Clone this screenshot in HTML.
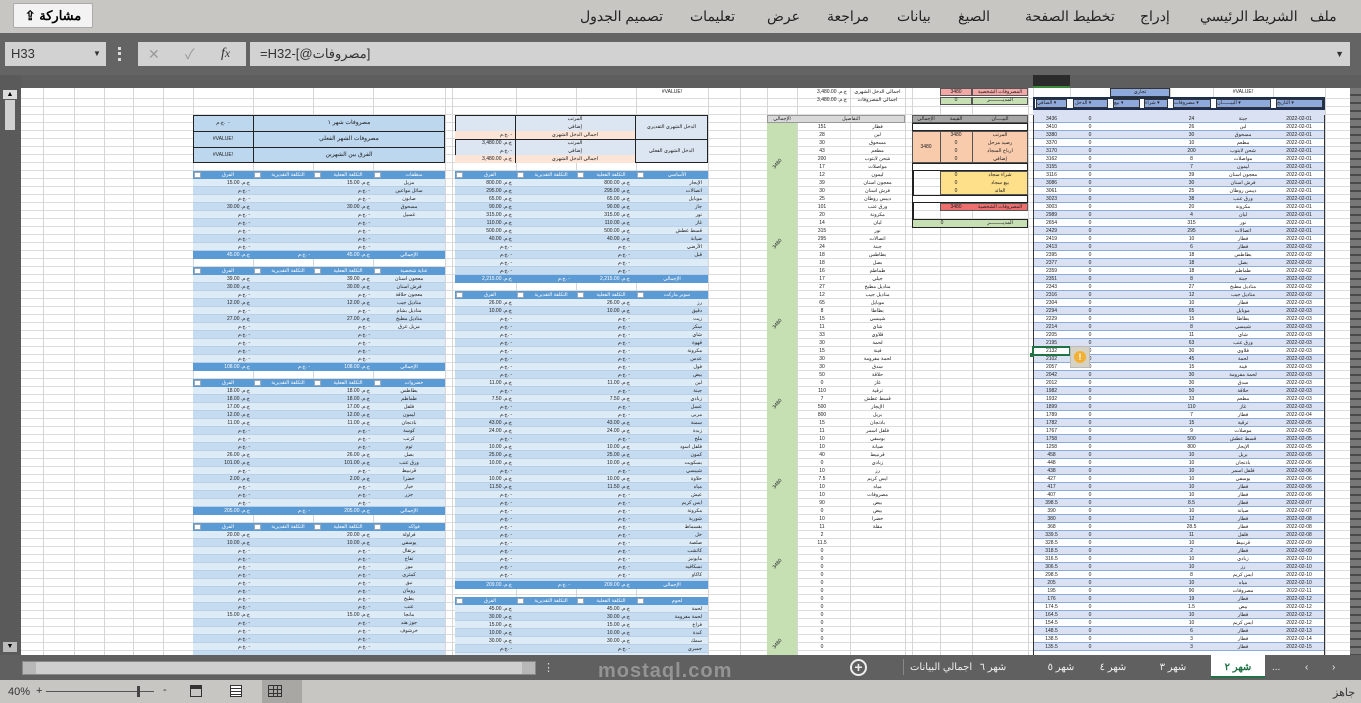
<!DOCTYPE html>
<html><head><meta charset="utf-8"><style>
*{margin:0;padding:0;box-sizing:border-box}
body{width:1361px;height:703px;overflow:hidden;background:#c8c6c3;position:relative;font-family:"Liberation Sans","Noto Sans CJK SC",sans-serif}
.a{position:absolute}
.t{position:absolute;font-size:5px;line-height:8px;color:#222;white-space:nowrap;overflow:hidden}
.ctr{text-align:center}.rt{text-align:right}
.vl{position:absolute;top:88px;width:1px;height:567px;background:#d6d6d6}
.hb{position:absolute;height:8px;background:#5b9bd5}
.band{position:absolute;background:repeating-linear-gradient(to bottom,#ddebf7 0 7px,#b9cfe8 7px 8px,#c5dbf0 8px 15px,#b9cfe8 15px 16px)}
.cb{position:absolute;width:7px;height:6px;background:#fff;border:1px solid #9ab}
.menu{position:absolute;top:8px;font-size:14px;color:#222}
.tab{position:absolute;top:662px;font-size:10px;color:#eee;white-space:nowrap}
.hl{position:absolute;font-size:5px;line-height:8px;color:#fff;text-align:center;white-space:nowrap}
</style></head><body>

<!-- ribbon -->
<div class="a" style="left:13px;top:3px;width:80px;height:25px;background:#f3f3f3;border:1px solid #aaa;border-radius:2px;font-size:13px;font-weight:bold;line-height:23px;text-align:center">⇪ مشاركة</div>
<div class="menu" style="left:580px">تصميم الجدول</div>
<div class="menu" style="left:690px">تعليمات</div>
<div class="menu" style="left:767px">عرض</div>
<div class="menu" style="left:827px">مراجعة</div>
<div class="menu" style="left:897px">بيانات</div>
<div class="menu" style="left:958px">الصيغ</div>
<div class="menu" style="left:1025px">تخطيط الصفحة</div>
<div class="menu" style="left:1140px">إدراج</div>
<div class="menu" style="left:1200px">الشريط الرئيسي</div>
<div class="menu" style="left:1310px">ملف</div>

<!-- formula area -->
<div class="a" style="left:0;top:33px;width:1361px;height:42px;background:#646464"></div>
<div class="a" style="left:5px;top:42px;width:101px;height:24px;background:#d2d2d2;font-size:13px;line-height:24px;padding-left:6px;color:#333">H33<span style="position:absolute;left:88px;font-size:8px">▼</span></div>
<div class="a" style="left:118px;top:47px;width:3px;height:14px;border-left:3px dotted #ddd"></div>
<div class="a" style="left:138px;top:42px;width:108px;height:24px;background:#d2d2d2;font-size:14px;line-height:24px;color:#999"><span style="position:absolute;left:10px">✕</span><span style="position:absolute;left:47px">✓</span><span style="position:absolute;left:83px;color:#333;font-style:italic;font-family:'Liberation Serif'">f<small>x</small></span></div>
<div class="a" style="left:250px;top:42px;width:1100px;height:24px;background:#d2d2d2;font-size:13px;line-height:24px;padding-left:10px;color:#333">=H32-[@مصروفات]<span style="position:absolute;right:6px;font-size:9px">▼</span></div>

<!-- column headers -->
<div class="a" style="left:0;top:75px;width:1361px;height:13px;background:#5e5e5e"></div>
<div class="a" style="left:1033px;top:75px;width:37px;height:13px;background:#2b2b2b;border-bottom:2px solid #3a8a3a"></div>
<div class="t" style="top:77px;left:0;width:1361px;color:#ddd;font-size:6px">
<span class="a" style="left:28px">AH</span><span class="a" style="left:56px">AG</span><span class="a" style="left:86px">AF</span><span class="a" style="left:115px">AE</span><span class="a" style="left:145px">AD</span><span class="a" style="left:175px">AC</span><span class="a" style="left:220px">AB</span><span class="a" style="left:280px">AA</span><span class="a" style="left:341px">Z</span><span class="a" style="left:407px">Y</span><span class="a" style="left:447px">X</span><span class="a" style="left:482px">W</span><span class="a" style="left:544px">V</span><span class="a" style="left:604px">U</span><span class="a" style="left:670px">T</span><span class="a" style="left:722px">S</span><span class="a" style="left:752px">R</span><span class="a" style="left:780px">Q</span><span class="a" style="left:821px">P</span><span class="a" style="left:876px">O</span><span class="a" style="left:906px">N M</span><span class="a" style="left:924px">L</span><span class="a" style="left:954px">K</span><span class="a" style="left:998px">J</span><span class="a" style="left:1029px">I</span><span class="a" style="left:1049px">H</span><span class="a" style="left:1088px">G</span><span class="a" style="left:1124px">F</span><span class="a" style="left:1154px">E</span><span class="a" style="left:1189px">D</span><span class="a" style="left:1241px">C</span><span class="a" style="left:1297px">B</span><span class="a" style="left:1336px">A</span></div>

<!-- grid -->
<div class="a" style="left:21px;top:88px;width:1329px;height:567px;background:#fff repeating-linear-gradient(to bottom,transparent 0 7px,#dcdcdc 7px 8px);background-position:0 3px"></div>
<div class="vl" style="left:43px"></div><div class="vl" style="left:74px"></div><div class="vl" style="left:104px"></div><div class="vl" style="left:133px"></div><div class="vl" style="left:163px"></div><div class="vl" style="left:193px"></div><div class="vl" style="left:253px"></div><div class="vl" style="left:313px"></div><div class="vl" style="left:373px"></div><div class="vl" style="left:445px"></div><div class="vl" style="left:452px"></div><div class="vl" style="left:516px"></div><div class="vl" style="left:576px"></div><div class="vl" style="left:636px"></div><div class="vl" style="left:708px"></div><div class="vl" style="left:740px"></div><div class="vl" style="left:767px"></div><div class="vl" style="left:797px"></div><div class="vl" style="left:850px"></div><div class="vl" style="left:905px"></div><div class="vl" style="left:912px"></div><div class="vl" style="left:940px"></div><div class="vl" style="left:972px"></div><div class="vl" style="left:1028px"></div><div class="vl" style="left:1033px"></div><div class="vl" style="left:1070px"></div><div class="vl" style="left:1110px"></div><div class="vl" style="left:1142px"></div><div class="vl" style="left:1170px"></div><div class="vl" style="left:1213px"></div><div class="vl" style="left:1273px"></div><div class="vl" style="left:1325px"></div>

<!-- left scrollbar -->
<div class="a" style="left:0;top:75px;width:21px;height:580px;background:#5a5a5a"></div>
<div class="a" style="left:3px;top:90px;width:14px;height:9px;background:#ddd;font-size:7px;text-align:center;line-height:9px">▲</div>
<div class="a" style="left:5px;top:100px;width:10px;height:30px;background:#d0d0d0"></div>
<div class="a" style="left:3px;top:642px;width:14px;height:10px;background:#bbb;font-size:7px;text-align:center;line-height:10px">▼</div>
<div class="a" style="left:1350px;top:88px;width:11px;height:567px;background:repeating-linear-gradient(to bottom,#777 0 6px,#4a4a4a 6px 8px)"></div>

<!-- LEFT BLOCK -->
<div class="a" style="left:193px;top:115px;width:252px;height:48px;background:#bdd7ee;border:1px solid #222"></div>
<div class="a" style="left:253px;top:115px;width:1px;height:48px;background:#222"></div>
<div class="a" style="left:193px;top:131px;width:252px;height:1px;background:#222"></div>
<div class="a" style="left:193px;top:147px;width:252px;height:1px;background:#222"></div>
<div class="t ctr" style="left:253px;top:119px;width:192px;font-size:6px">مصروفات شهر ١</div>
<div class="t ctr" style="left:253px;top:135px;width:192px;font-size:6px">مصروفات الشهر الفعلي</div>
<div class="t ctr" style="left:253px;top:151px;width:192px;font-size:6px">الفرق بين الشهرين</div>
<div class="t ctr" style="left:193px;top:119px;width:60px">ج.م. &nbsp;-</div>
<div class="t ctr" style="left:193px;top:135px;width:60px">#VALUE!</div>
<div class="t ctr" style="left:193px;top:151px;width:60px">#VALUE!</div>

<div class="hb" style="left:193px;top:171px;width:252px"></div>
<div class="band" style="left:193px;top:179px;width:252px;height:72px"></div>
<div class="hb" style="left:193px;top:251px;width:252px"></div>
<div class="hb" style="left:193px;top:267px;width:252px"></div>
<div class="band" style="left:193px;top:275px;width:252px;height:88px"></div>
<div class="hb" style="left:193px;top:363px;width:252px"></div>
<div class="hb" style="left:193px;top:379px;width:252px"></div>
<div class="band" style="left:193px;top:387px;width:252px;height:120px"></div>
<div class="hb" style="left:193px;top:507px;width:252px"></div>
<div class="hb" style="left:193px;top:523px;width:252px"></div>
<div class="band" style="left:193px;top:531px;width:252px;height:124px"></div>
<div class="cb" style="left:194px;top:172px"></div><div class="cb" style="left:254px;top:172px"></div><div class="cb" style="left:314px;top:172px"></div><div class="cb" style="left:374px;top:172px"></div>
<div class="cb" style="left:194px;top:268px"></div><div class="cb" style="left:254px;top:268px"></div><div class="cb" style="left:314px;top:268px"></div><div class="cb" style="left:374px;top:268px"></div>
<div class="cb" style="left:194px;top:380px"></div><div class="cb" style="left:254px;top:380px"></div><div class="cb" style="left:314px;top:380px"></div><div class="cb" style="left:374px;top:380px"></div>
<div class="cb" style="left:194px;top:524px"></div><div class="cb" style="left:254px;top:524px"></div><div class="cb" style="left:314px;top:524px"></div><div class="cb" style="left:374px;top:524px"></div>
<div class="hl" style="left:203px;top:171px;width:50px">الفرق</div><div class="hl" style="left:263px;top:171px;width:50px">التكلفة التقديرية</div><div class="hl" style="left:323px;top:171px;width:50px">التكلفة الفعلية</div><div class="hl" style="left:383px;top:171px;width:62px">منظفات</div>
<div class="hl" style="left:203px;top:267px;width:50px">الفرق</div><div class="hl" style="left:263px;top:267px;width:50px">التكلفة التقديرية</div><div class="hl" style="left:323px;top:267px;width:50px">التكلفة الفعلية</div><div class="hl" style="left:383px;top:267px;width:62px">عناية شخصية</div>
<div class="hl" style="left:203px;top:379px;width:50px">الفرق</div><div class="hl" style="left:263px;top:379px;width:50px">التكلفة التقديرية</div><div class="hl" style="left:323px;top:379px;width:50px">التكلفة الفعلية</div><div class="hl" style="left:383px;top:379px;width:62px">خضروات</div>
<div class="hl" style="left:203px;top:523px;width:50px">الفرق</div><div class="hl" style="left:263px;top:523px;width:50px">التكلفة التقديرية</div><div class="hl" style="left:323px;top:523px;width:50px">التكلفة الفعلية</div><div class="hl" style="left:383px;top:523px;width:62px">فواكه</div>
<div class="t rt" style="left:200px;top:251px;width:50px;color:#fff">ج.م. 45.00</div><div class="t rt" style="left:260px;top:251px;width:50px;color:#fff">ج.م. -</div><div class="t rt" style="left:320px;top:251px;width:50px;color:#fff">ج.م. 45.00</div><div class="t ctr" style="left:373px;top:251px;width:72px;color:#fff">الإجمالي</div>
<div class="t rt" style="left:200px;top:363px;width:50px;color:#fff">ج.م. 108.00</div><div class="t rt" style="left:260px;top:363px;width:50px;color:#fff">ج.م. -</div><div class="t rt" style="left:320px;top:363px;width:50px;color:#fff">ج.م. 108.00</div><div class="t ctr" style="left:373px;top:363px;width:72px;color:#fff">الإجمالي</div>
<div class="t rt" style="left:200px;top:507px;width:50px;color:#fff">ج.م. 205.00</div><div class="t rt" style="left:260px;top:507px;width:50px;color:#fff">ج.م. -</div><div class="t rt" style="left:320px;top:507px;width:50px;color:#fff">ج.م. 205.00</div><div class="t ctr" style="left:373px;top:507px;width:72px;color:#fff">الإجمالي</div>
<div class="t rt" style="left:200px;top:179px;width:50px">ج.م. 15.00<br>ج.م. -<br>ج.م. -<br>ج.م. 30.00<br>ج.م. -<br>ج.م. -<br>ج.م. -<br>ج.م. -<br>ج.م. -</div>
<div class="t rt" style="left:320px;top:179px;width:50px">ج.م. 15.00<br>ج.م. -<br>ج.م. -<br>ج.م. 30.00<br>ج.م. -<br>ج.م. -<br>ج.م. -<br>ج.م. -<br>ج.م. -</div>
<div class="t ctr" style="left:373px;top:179px;width:72px">مزيل<br>سائل مواعين<br>صابون<br>مسحوق<br>غسيل</div>
<div class="t rt" style="left:200px;top:275px;width:50px">ج.م. 39.00<br>ج.م. 30.00<br>ج.م. -<br>ج.م. 12.00<br>ج.م. -<br>ج.م. 27.00<br>ج.م. -<br>ج.م. -<br>ج.م. -<br>ج.م. -<br>ج.م. -</div>
<div class="t rt" style="left:320px;top:275px;width:50px">ج.م. 39.00<br>ج.م. 30.00<br>ج.م. -<br>ج.م. 12.00<br>ج.م. -<br>ج.م. 27.00<br>ج.م. -<br>ج.م. -<br>ج.م. -<br>ج.م. -<br>ج.م. -</div>
<div class="t ctr" style="left:373px;top:275px;width:72px">معجون اسنان<br>فرش اسنان<br>معجون حلاقة<br>مناديل جيب<br>مناديل بشام<br>مناديل مطبخ<br>مزيل عرق</div>
<div class="t rt" style="left:200px;top:387px;width:50px">ج.م. 18.00<br>ج.م. 18.00<br>ج.م. 17.00<br>ج.م. 12.00<br>ج.م. 11.00<br>ج.م. -<br>ج.م. -<br>ج.م. -<br>ج.م. 26.00<br>ج.م. 101.00<br>ج.م. -<br>ج.م. 2.00<br>ج.م. -<br>ج.م. -<br>ج.م. -</div>
<div class="t rt" style="left:320px;top:387px;width:50px">ج.م. 18.00<br>ج.م. 18.00<br>ج.م. 17.00<br>ج.م. 12.00<br>ج.م. 11.00<br>ج.م. -<br>ج.م. -<br>ج.م. -<br>ج.م. 26.00<br>ج.م. 101.00<br>ج.م. -<br>ج.م. 2.00<br>ج.م. -<br>ج.م. -<br>ج.م. -</div>
<div class="t ctr" style="left:373px;top:387px;width:72px">بطاطس<br>طماطم<br>فلفل<br>ليمون<br>باذنجان<br>كوسة<br>كرنب<br>ثوم<br>بصل<br>ورق عنب<br>قرنبيط<br>خضرا<br>خيار<br>جزر</div>
<div class="t rt" style="left:200px;top:531px;width:50px">ج.م. 20.00<br>ج.م. 10.00<br>ج.م. -<br>ج.م. -<br>ج.م. -<br>ج.م. -<br>ج.م. -<br>ج.م. -<br>ج.م. -<br>ج.م. -<br>ج.م. 15.00<br>ج.م. -<br>ج.م. -<br>ج.م. -<br>ج.م. -</div>
<div class="t rt" style="left:320px;top:531px;width:50px">ج.م. 20.00<br>ج.م. 10.00<br>ج.م. -<br>ج.م. -<br>ج.م. -<br>ج.م. -<br>ج.م. -<br>ج.م. -<br>ج.م. -<br>ج.م. -<br>ج.م. 15.00<br>ج.م. -<br>ج.م. -<br>ج.م. -<br>ج.م. -</div>
<div class="t ctr" style="left:373px;top:531px;width:72px">فراولة<br>يوسفي<br>برتقال<br>تفاح<br>موز<br>كمثرى<br>نبق<br>رومان<br>بطيخ<br>عنب<br>مانجا<br>جوز هند<br>خرشوف</div>

<!-- MIDDLE BLOCK -->
<div class="a" style="left:455px;top:115px;width:253px;height:48px;background:#dce6f2;border:1px solid #222"></div>
<div class="a" style="left:455px;top:131px;width:180px;height:8px;background:#fce4d6"></div>
<div class="a" style="left:455px;top:155px;width:180px;height:8px;background:#fce4d6"></div>
<div class="a" style="left:635px;top:115px;width:73px;height:48px;background:#dce6f2;border:1px solid #222"></div>
<div class="a" style="left:455px;top:139px;width:253px;height:1px;background:#222"></div>
<div class="a" style="left:515px;top:115px;width:1px;height:48px;background:#222"></div>
<div class="t ctr" style="left:515px;top:115px;width:120px">المرتب<br>إضافي<br>اجمالي الدخل الشهري<br>المرتب<br>إضافي<br>اجمالي الدخل الشهري</div>
<div class="t rt" style="left:458px;top:115px;width:54px"><br><br>ج.م. -<br>ج.م. 3,480.00<br>ج.م. -<br>ج.م. 3,480.00</div>
<div class="t ctr" style="left:635px;top:123px;width:73px">الدخل الشهري التقديري</div>
<div class="t ctr" style="left:635px;top:147px;width:73px">الدخل الشهري الفعلي</div>

<div class="hb" style="left:455px;top:171px;width:253px"></div>
<div class="band" style="left:455px;top:179px;width:253px;height:96px"></div>
<div class="hb" style="left:455px;top:275px;width:253px"></div>
<div class="hb" style="left:455px;top:291px;width:253px"></div>
<div class="band" style="left:455px;top:299px;width:253px;height:282px"></div>
<div class="hb" style="left:455px;top:581px;width:253px"></div>
<div class="hb" style="left:455px;top:597px;width:253px"></div>
<div class="band" style="left:455px;top:605px;width:253px;height:50px"></div>
<div class="cb" style="left:456px;top:172px"></div><div class="cb" style="left:517px;top:172px"></div><div class="cb" style="left:577px;top:172px"></div><div class="cb" style="left:637px;top:172px"></div>
<div class="cb" style="left:456px;top:292px"></div><div class="cb" style="left:517px;top:292px"></div><div class="cb" style="left:577px;top:292px"></div><div class="cb" style="left:637px;top:292px"></div>
<div class="cb" style="left:456px;top:598px"></div><div class="cb" style="left:517px;top:598px"></div><div class="cb" style="left:577px;top:598px"></div><div class="cb" style="left:637px;top:598px"></div>
<div class="hl" style="left:465px;top:171px;width:50px">الفرق</div><div class="hl" style="left:526px;top:171px;width:50px">التكلفة التقديرية</div><div class="hl" style="left:586px;top:171px;width:50px">التكلفة الفعلية</div><div class="hl" style="left:646px;top:171px;width:62px">الأساسي</div>
<div class="hl" style="left:465px;top:291px;width:50px">الفرق</div><div class="hl" style="left:526px;top:291px;width:50px">التكلفة التقديرية</div><div class="hl" style="left:586px;top:291px;width:50px">التكلفة الفعلية</div><div class="hl" style="left:646px;top:291px;width:62px">سوبر ماركت</div>
<div class="hl" style="left:465px;top:597px;width:50px">الفرق</div><div class="hl" style="left:526px;top:597px;width:50px">التكلفة التقديرية</div><div class="hl" style="left:586px;top:597px;width:50px">التكلفة الفعلية</div><div class="hl" style="left:646px;top:597px;width:62px">لحوم</div>
<div class="t rt" style="left:462px;top:275px;width:50px;color:#fff">ج.م. 2,215.00</div><div class="t rt" style="left:520px;top:275px;width:50px;color:#fff">ج.م. -</div><div class="t rt" style="left:580px;top:275px;width:50px;color:#fff">ج.م. 2,215.00</div><div class="t ctr" style="left:636px;top:275px;width:72px;color:#fff">الإجمالي</div>
<div class="t rt" style="left:462px;top:581px;width:50px;color:#fff">ج.م. 209.00</div><div class="t rt" style="left:520px;top:581px;width:50px;color:#fff">ج.م. -</div><div class="t rt" style="left:580px;top:581px;width:50px;color:#fff">ج.م. 209.00</div><div class="t ctr" style="left:636px;top:581px;width:72px;color:#fff">الإجمالي</div>
<div class="t rt" style="left:462px;top:179px;width:50px">ج.م. 800.00<br>ج.م. 295.00<br>ج.م. 65.00<br>ج.م. 90.00<br>ج.م. 315.00<br>ج.م. 110.00<br>ج.م. 500.00<br>ج.م. 40.00<br>ج.م. -<br>ج.م. -<br>ج.م. -<br>ج.م. -</div>
<div class="t rt" style="left:580px;top:179px;width:50px">ج.م. 800.00<br>ج.م. 295.00<br>ج.م. 65.00<br>ج.م. 90.00<br>ج.م. 315.00<br>ج.م. 110.00<br>ج.م. 500.00<br>ج.م. 40.00<br>ج.م. -<br>ج.م. -<br>ج.م. -<br>ج.م. -</div>
<div class="t rt" style="left:640px;top:179px;width:62px">الإيجار<br>اتصالات<br>موبايل<br>جاز<br>نور<br>غاز<br>قسط عطش<br>صيانة<br>الأرضي<br>قبل</div>
<div class="t rt" style="left:462px;top:299px;width:50px">ج.م. 26.00<br>ج.م. 10.00<br>ج.م. -<br>ج.م. -<br>ج.م. -<br>ج.م. -<br>ج.م. -<br>ج.م. -<br>ج.م. -<br>ج.م. -<br>ج.م. 11.00<br>ج.م. -<br>ج.م. 7.50<br>ج.م. -<br>ج.م. -<br>ج.م. 43.00<br>ج.م. 24.00<br>ج.م. -<br>ج.م. 10.00<br>ج.م. 25.00<br>ج.م. 10.00<br>ج.م. -<br>ج.م. 10.00<br>ج.م. 11.50<br>ج.م. -<br>ج.م. -<br>ج.م. -<br>ج.م. -<br>ج.م. -<br>ج.م. -<br>ج.م. -<br>ج.م. -<br>ج.م. -<br>ج.م. -<br>ج.م. -</div>
<div class="t rt" style="left:580px;top:299px;width:50px">ج.م. 26.00<br>ج.م. 10.00<br>ج.م. -<br>ج.م. -<br>ج.م. -<br>ج.م. -<br>ج.م. -<br>ج.م. -<br>ج.م. -<br>ج.م. -<br>ج.م. 11.00<br>ج.م. -<br>ج.م. 7.50<br>ج.م. -<br>ج.م. -<br>ج.م. 43.00<br>ج.م. 24.00<br>ج.م. -<br>ج.م. 10.00<br>ج.م. 25.00<br>ج.م. 10.00<br>ج.م. -<br>ج.م. 10.00<br>ج.م. 11.50<br>ج.م. -<br>ج.م. -<br>ج.م. -<br>ج.م. -<br>ج.م. -<br>ج.م. -<br>ج.م. -<br>ج.م. -<br>ج.م. -<br>ج.م. -<br>ج.م. -</div>
<div class="t rt" style="left:640px;top:299px;width:62px">رز<br>دقيق<br>زيت<br>سكر<br>شاي<br>قهوة<br>مكرونة<br>عدس<br>فول<br>بيض<br>لبن<br>جبنة<br>زبادي<br>عسل<br>مربى<br>سمنة<br>زبدة<br>ملح<br>فلفل اسود<br>كمون<br>بسكويت<br>شيبسي<br>حلاوة<br>مياه<br>عيش<br>ايس كريم<br>مكرونة<br>شوربة<br>بقسماط<br>خل<br>صلصة<br>كاتشب<br>مايونيز<br>نسكافيه<br>كاكاو</div>
<div class="t rt" style="left:462px;top:605px;width:50px">ج.م. 45.00<br>ج.م. 30.00<br>ج.م. 15.00<br>ج.م. 10.00<br>ج.م. 30.00<br>ج.م. -</div>
<div class="t rt" style="left:580px;top:605px;width:50px">ج.م. 45.00<br>ج.م. 30.00<br>ج.م. 15.00<br>ج.م. 10.00<br>ج.م. 30.00<br>ج.م. -</div>
<div class="t rt" style="left:640px;top:605px;width:62px">لحمة<br>لحمة مفرومة<br>فراخ<br>كبدة<br>سمك<br>جمبري</div>
<div class="t ctr" style="left:636px;top:88px;width:72px">#VALUE!</div>

<!-- Q/P/O -->
<div class="t rt" style="left:797px;top:88px;width:50px">ج.م. 3,480.00<br>ج.م. 3,480.00</div>
<div class="t ctr" style="left:850px;top:88px;width:55px">اجمالي الدخل الشهري<br>اجمالي المصروفات</div>
<div class="a" style="left:767px;top:115px;width:138px;height:8px;background:#d9d9d9;border:1px solid #999"></div>
<div class="t ctr" style="left:767px;top:115px;width:30px">الإجمالي</div>
<div class="t ctr" style="left:797px;top:115px;width:108px">التفاصيل</div>
<div class="a" style="left:767px;top:123px;width:30px;height:532px;background:#c6e0b4"></div>
<div class="t" style="left:772px;top:160px;transform:rotate(-50deg)">3480</div>
<div class="t" style="left:772px;top:240px;transform:rotate(-50deg)">3480</div>
<div class="t" style="left:772px;top:320px;transform:rotate(-50deg)">3480</div>
<div class="t" style="left:772px;top:400px;transform:rotate(-50deg)">3480</div>
<div class="t" style="left:772px;top:480px;transform:rotate(-50deg)">3480</div>
<div class="t" style="left:772px;top:560px;transform:rotate(-50deg)">3480</div>
<div class="t" style="left:772px;top:640px;transform:rotate(-50deg)">3480</div>
<div class="t ctr" style="left:797px;top:123px;width:50px">151<br>28<br>30<br>43<br>200<br>17<br>12<br>39<br>30<br>25<br>101<br>20<br>14<br>315<br>295<br>24<br>18<br>18<br>16<br>17<br>27<br>12<br>65<br>8<br>15<br>11<br>33<br>30<br>15<br>30<br>30<br>50<br>0<br>110<br>7<br>500<br>800<br>15<br>11<br>10<br>10<br>40<br>0<br>10<br>7.5<br>10<br>10<br>90<br>0<br>10<br>11<br>2<br>11.5<br>0<br>0<br>0<br>0<br>0<br>0<br>0<br>0<br>0<br>0<br>0<br>0<br>0</div>
<div class="t ctr" style="left:850px;top:123px;width:55px">فطار<br>لبن<br>مسحوق<br>مطعم<br>شحن لابتوب<br>مواصلات<br>ليمون<br>معجون اسنان<br>فرش اسنان<br>ديبس روطان<br>ورق عنب<br>مكرونة<br>لبان<br>نور<br>اتصالات<br>جبنة<br>بطاطس<br>بصل<br>طماطم<br>جيلي<br>مناديل مطبخ<br>مناديل جيب<br>موبايل<br>بطاطا<br>شيبسي<br>شاي<br>قلاوي<br>لحمة<br>فينة<br>لحمة مفرومة<br>سدق<br>حلاقة<br>غاز<br>ترقية<br>قسط عطش<br>الإيجار<br>بريل<br>باذنجان<br>فلفل اسمر<br>بوسفي<br>صيانة<br>قرنبيط<br>زبادي<br>رز<br>ايس كريم<br>مياه<br>مصروفات<br>بيض<br>بيض<br>خضرا<br>مقلة</div>

<!-- J K L -->
<div class="a" style="left:940px;top:88px;width:32px;height:8px;background:#f4a7a7;border:1px solid #555"></div>
<div class="a" style="left:972px;top:88px;width:56px;height:8px;background:#f4a7a7;border:1px solid #555"></div>
<div class="a" style="left:940px;top:97px;width:32px;height:8px;background:#c6e0b4;border:1px solid #555"></div>
<div class="a" style="left:972px;top:97px;width:56px;height:8px;background:#c6e0b4;border:1px solid #555"></div>
<div class="t ctr" style="left:940px;top:88px;width:32px">3480<br>0</div>
<div class="t ctr" style="left:972px;top:88px;width:56px">المصروفات الشخصية<br>المديـــــــــر</div>
<div class="a" style="left:912px;top:115px;width:116px;height:8px;background:#a6a6a6;border:1px solid #555"></div>
<div class="t ctr" style="left:912px;top:115px;width:28px">الإجمالي</div><div class="t ctr" style="left:940px;top:115px;width:32px">القيمة</div><div class="t ctr" style="left:972px;top:115px;width:56px">البيــــان</div>
<div class="a" style="left:912px;top:123px;width:116px;height:8px;border:1px solid #222;background:#fff"></div>
<div class="a" style="left:912px;top:131px;width:116px;height:32px;background:#f8cbad;border:1px solid #555"></div>
<div class="a" style="left:940px;top:131px;width:1px;height:32px;background:#555"></div>
<div class="a" style="left:972px;top:131px;width:1px;height:32px;background:#555"></div>
<div class="t ctr" style="left:912px;top:143px;width:28px">3480</div>
<div class="t ctr" style="left:940px;top:131px;width:32px">3480<br>0<br>0<br>0</div>
<div class="t ctr" style="left:972px;top:131px;width:56px">المرتب<br>رصيد مرحل<br>ارباح السجاد<br>إضافي</div>
<div class="a" style="left:912px;top:163px;width:116px;height:8px;border:1px solid #222;background:#fff"></div>
<div class="a" style="left:940px;top:171px;width:88px;height:24px;background:#ffe08a;border:1px solid #555"></div>
<div class="t ctr" style="left:940px;top:171px;width:32px">0<br>0<br>0</div>
<div class="t ctr" style="left:972px;top:171px;width:56px">شراء سجاد<br>بيع سجاد<br>العائد</div>
<div class="a" style="left:912px;top:171px;width:2px;height:48px;background:#222"></div>
<div class="a" style="left:912px;top:195px;width:116px;height:8px;border:1px solid #222;background:#fff"></div>
<div class="a" style="left:940px;top:203px;width:88px;height:8px;background:#ee6e6e;border:1px solid #555"></div>
<div class="t ctr" style="left:940px;top:203px;width:32px">3480</div><div class="t ctr" style="left:972px;top:203px;width:56px">المصروفات الشخصية</div>
<div class="a" style="left:912px;top:219px;width:116px;height:9px;background:#c6e0b4;border:1px solid #222"></div>
<div class="t ctr" style="left:912px;top:219px;width:60px">0</div><div class="t ctr" style="left:972px;top:219px;width:56px">المديـــــــــر</div>

<!-- RIGHT TABLE -->
<div class="a" style="left:1110px;top:88px;width:60px;height:9px;background:#8ea9db;border:1px solid #333"></div>
<div class="t ctr" style="left:1110px;top:88px;width:60px">تجاري</div>
<div class="t ctr" style="left:1213px;top:88px;width:60px">#VALUE!</div>
<div class="a" style="left:1033px;top:97px;width:292px;height:13px;background:#fff;border:2px solid #1f2f4f"></div>
<div class="a" style="left:1036px;top:99px;width:31px;height:9px;background:#8ea9db;border:1px solid #333"></div>
<div class="a" style="left:1073px;top:99px;width:35px;height:9px;background:#8ea9db;border:1px solid #333"></div>
<div class="a" style="left:1113px;top:99px;width:27px;height:9px;background:#8ea9db;border:1px solid #333"></div>
<div class="a" style="left:1144px;top:99px;width:24px;height:9px;background:#8ea9db;border:1px solid #333"></div>
<div class="a" style="left:1173px;top:99px;width:38px;height:9px;background:#8ea9db;border:1px solid #333"></div>
<div class="a" style="left:1216px;top:99px;width:55px;height:9px;background:#8ea9db;border:1px solid #333"></div>
<div class="a" style="left:1276px;top:99px;width:47px;height:9px;background:#8ea9db;border:1px solid #333"></div>
<div class="t" style="left:1037px;top:100px;line-height:7px">الصافي ▾</div>
<div class="t" style="left:1075px;top:100px;line-height:7px">الدخل ▾</div>
<div class="t" style="left:1114px;top:100px;line-height:7px">بيع ▾</div>
<div class="t" style="left:1145px;top:100px;line-height:7px">شراء ▾</div>
<div class="t" style="left:1174px;top:100px;line-height:7px">مصروفات ▾</div>
<div class="t" style="left:1217px;top:100px;line-height:7px">البيــــــان ▾</div>
<div class="t" style="left:1277px;top:100px;line-height:7px">التاريخ ▾</div>
<div class="a" style="left:1033px;top:110px;width:292px;height:5px;background:#d9e1f2"></div>
<div class="a" style="left:1033px;top:115px;width:292px;height:540px;background:repeating-linear-gradient(to bottom,#d9e1f2 0 7px,#8ea9db 7px 8px,#fff 8px 15px,#8ea9db 15px 16px);border-left:1px solid #333;border-right:1px solid #333"></div>
<div class="t ctr" style="left:1033px;top:115px;width:37px">3436<br>3410<br>3380<br>3370<br>3170<br>3162<br>3155<br>3116<br>3086<br>3061<br>3023<br>3003<br>2989<br>2654<br>2429<br>2419<br>2413<br>2395<br>2377<br>2359<br>2351<br>2343<br>2316<br>2304<br>2294<br>2229<br>2214<br>2205<br>2195<br>2132<br>2102<br>2057<br>2042<br>2012<br>1982<br>1932<br>1899<br>1789<br>1782<br>1767<br>1758<br>1258<br>458<br>448<br>438<br>427<br>417<br>407<br>398.5<br>390<br>380<br>368<br>339.5<br>328.5<br>318.5<br>316.5<br>306.5<br>298.5<br>205<br>195<br>176<br>174.5<br>164.5<br>154.5<br>148.5<br>138.5<br>135.5</div>
<div class="t ctr" style="left:1070px;top:115px;width:40px">0<br>0<br>0<br>0<br>0<br>0<br>0<br>0<br>0<br>0<br>0<br>0<br>0<br>0<br>0<br>0<br>0<br>0<br>0<br>0<br>0<br>0<br>0<br>0<br>0<br>0<br>0<br>0<br>0<br>0<br>0<br>0<br>0<br>0<br>0<br>0<br>0<br>0<br>0<br>0<br>0<br>0<br>0<br>0<br>0<br>0<br>0<br>0<br>0<br>0<br>0<br>0<br>0<br>0<br>0<br>0<br>0<br>0<br>0<br>0<br>0<br>0<br>0<br>0<br>0<br>0<br>0</div>
<div class="t ctr" style="left:1170px;top:115px;width:43px">24<br>26<br>30<br>10<br>200<br>8<br>7<br>39<br>30<br>25<br>38<br>20<br>4<br>315<br>295<br>10<br>6<br>18<br>18<br>18<br>8<br>27<br>12<br>10<br>65<br>15<br>8<br>11<br>63<br>30<br>45<br>15<br>30<br>30<br>50<br>33<br>110<br>7<br>15<br>9<br>500<br>800<br>10<br>10<br>10<br>10<br>10<br>10<br>8.5<br>10<br>12<br>28.5<br>11<br>10<br>2<br>10<br>10<br>8<br>10<br>90<br>19<br>1.5<br>10<br>10<br>6<br>3<br>3</div>
<div class="t ctr" style="left:1213px;top:115px;width:60px">جبنة<br>لبن<br>مسحوق<br>مطعم<br>شحن لابتوب<br>مواصلات<br>ليمون<br>معجون اسنان<br>فرش اسنان<br>ديبس روطان<br>ورق عنب<br>مكرونة<br>لبان<br>نور<br>اتصالات<br>فطار<br>فطار<br>بطاطس<br>بصل<br>طماطم<br>جبنة<br>مناديل مطبخ<br>مناديل جيب<br>فطار<br>موبايل<br>بطاطا<br>شيبسي<br>شاي<br>ورق عنب<br>قلاوي<br>لحمة<br>فينة<br>لحمة مفرومة<br>سدق<br>حلاقة<br>مطعم<br>غاز<br>فطار<br>ترقية<br>موصلات<br>قسط عطش<br>الإيجار<br>بريل<br>باذنجان<br>فلفل اسمر<br>بوسفي<br>فطار<br>فطار<br>فطار<br>صيانة<br>فطار<br>فطار<br>فلفل<br>قرنبيط<br>فطار<br>زبادي<br>رز<br>ايس كريم<br>مياه<br>مصروفات<br>فطار<br>بيض<br>فطار<br>ايس كريم<br>فطار<br>فطار<br>فطار</div>
<div class="t ctr" style="left:1273px;top:115px;width:52px">2022-02-01<br>2022-02-01<br>2022-02-01<br>2022-02-01<br>2022-02-01<br>2022-02-01<br>2022-02-01<br>2022-02-01<br>2022-02-01<br>2022-02-01<br>2022-02-01<br>2022-02-01<br>2022-02-01<br>2022-02-01<br>2022-02-01<br>2022-02-01<br>2022-02-02<br>2022-02-02<br>2022-02-02<br>2022-02-02<br>2022-02-02<br>2022-02-02<br>2022-02-02<br>2022-02-03<br>2022-02-03<br>2022-02-03<br>2022-02-03<br>2022-02-03<br>2022-02-03<br>2022-02-03<br>2022-02-03<br>2022-02-03<br>2022-02-03<br>2022-02-03<br>2022-02-03<br>2022-02-03<br>2022-02-03<br>2022-02-04<br>2022-02-05<br>2022-02-05<br>2022-02-05<br>2022-02-05<br>2022-02-05<br>2022-02-06<br>2022-02-06<br>2022-02-06<br>2022-02-06<br>2022-02-06<br>2022-02-07<br>2022-02-07<br>2022-02-08<br>2022-02-08<br>2022-02-08<br>2022-02-09<br>2022-02-09<br>2022-02-10<br>2022-02-10<br>2022-02-10<br>2022-02-10<br>2022-02-11<br>2022-02-12<br>2022-02-12<br>2022-02-12<br>2022-02-12<br>2022-02-13<br>2022-02-14<br>2022-02-15</div>
<div class="a" style="left:1032px;top:346px;width:39px;height:10px;border:2px solid #217346"></div>
<div class="a" style="left:1030px;top:353px;width:4px;height:4px;background:#217346"></div>
<div class="a" style="left:1070px;top:346px;width:20px;height:22px;background:#d6d2c4;border:1px solid #bbb"></div>
<div class="a" style="left:1074px;top:351px;width:12px;height:12px;border-radius:6px;background:#f2b134;color:#fff;font-size:9px;font-weight:bold;text-align:center;line-height:12px">!</div>

<!-- bottom tab bar -->
<div class="a" style="left:0;top:655px;width:1361px;height:25px;background:#606060"></div>
<div class="a" style="left:22px;top:661px;width:514px;height:14px;background:#b8b8b8;border:1px solid #888"></div>
<div class="a" style="left:36px;top:662px;width:486px;height:12px;background:#cfcfcf"></div>
<div class="a" style="left:543px;top:661px;color:#ddd;font-size:11px">⋮</div>
<div class="a" style="left:850px;top:659px;width:17px;height:17px;border:2px solid #eee;border-radius:50%;color:#eee;font-size:14px;line-height:13px;text-align:center;font-weight:bold">+</div>
<div class="a" style="left:903px;top:659px;width:1px;height:16px;background:#888"></div>
<div class="tab" style="left:910px;width:62px;text-align:center">اجمالي البيانات</div>
<div class="tab" style="left:976px;width:34px;text-align:center">شهر ٦</div>
<div class="tab" style="left:1044px;width:34px;text-align:center">شهر ٥</div>
<div class="tab" style="left:1096px;width:34px;text-align:center">شهر ٤</div>
<div class="tab" style="left:1156px;width:34px;text-align:center">شهر ٣</div>
<div class="a" style="left:1211px;top:655px;width:54px;height:23px;background:#fff;border-bottom:2px solid #217346"></div>
<div class="tab" style="left:1211px;width:54px;text-align:center;color:#217346;font-weight:bold">شهر ٢</div>
<div class="tab" style="left:1272px">...</div>
<div class="tab" style="left:1305px">‹</div>
<div class="tab" style="left:1332px">›</div>
<div class="a" style="left:598px;top:660px;font-size:20px;color:rgba(200,200,200,0.5);font-weight:bold;letter-spacing:1px">mostaql.com</div>

<!-- status bar -->
<div class="a" style="left:262px;top:680px;width:40px;height:23px;background:#a9a7a4"></div>
<div class="a" style="left:8px;top:686px;font-size:11px;color:#333">40%</div>
<div class="a" style="left:36px;top:685px;font-size:11px;color:#333">+</div>
<div class="a" style="left:46px;top:691px;width:108px;height:1px;background:#555"></div>
<div class="a" style="left:137px;top:686px;width:3px;height:11px;background:#444"></div>
<div class="a" style="left:163px;top:684px;font-size:11px;color:#333">-</div>
<div class="a" style="left:190px;top:685px;width:12px;height:12px;border:1px solid #333;border-top:4px solid #333"></div>
<div class="a" style="left:230px;top:685px;width:12px;height:12px;border:1px solid #333;background:repeating-linear-gradient(#fff 0 2px,#333 2px 3px)"></div>
<div class="a" style="left:268px;top:685px;width:14px;height:12px;border:1px solid #333;background:linear-gradient(90deg,transparent 4px,#333 4px 5px,transparent 5px 8px,#333 8px 9px,transparent 9px),linear-gradient(transparent 3px,#333 3px 4px,transparent 4px 7px,#333 7px 8px,transparent 8px)"></div>
<div class="a" style="left:1333px;top:686px;font-size:11px;color:#333">جاهز</div>
</body></html>
